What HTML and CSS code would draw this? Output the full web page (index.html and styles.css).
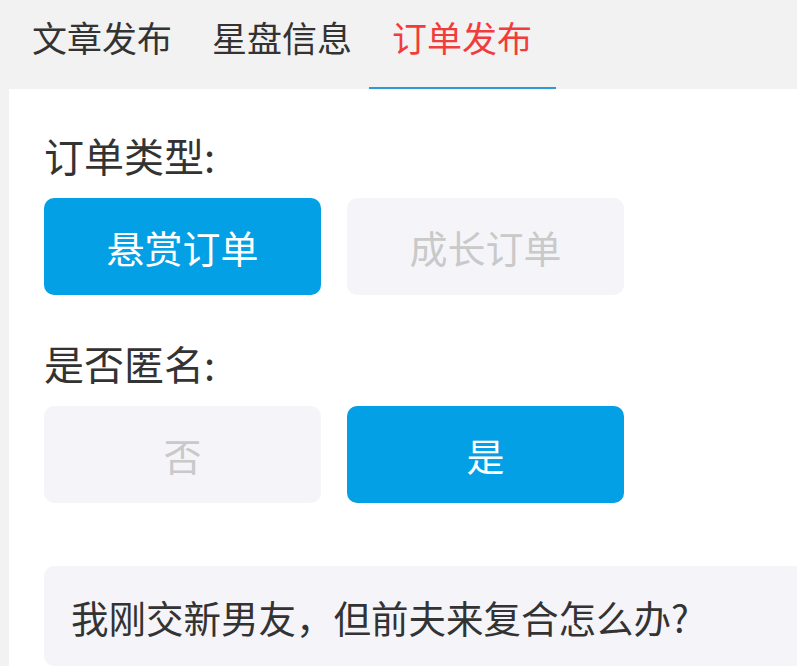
FILE: index.html
```html
<!DOCTYPE html>
<html lang="zh-CN">
<head>
<meta charset="utf-8">
<title>订单发布</title>
<link rel="stylesheet" href="styles.css">
</head>
<body>
  <nav class="tabs">
    <div class="tab">文章发布</div>
    <div class="tab">星盘信息</div>
    <div class="tab active">订单发布</div>
  </nav>
  <main class="panel">
    <section class="field">
      <div class="label">订单类型:</div>
      <div class="options">
        <div class="opt on">悬赏订单</div>
        <div class="opt">成长订单</div>
      </div>
    </section>
    <section class="field">
      <div class="label">是否匿名:</div>
      <div class="options">
        <div class="opt">否</div>
        <div class="opt on">是</div>
      </div>
    </section>
    <div class="question">我刚交新男友，但前夫来复合怎么办?</div>
  </main>
</body>
</html>
```
FILE: styles.css
```css
html, body {
  margin: 0;
  padding: 0;
}
body {
  background: #f2f2f2;
  font-family: "Noto Sans CJK SC", "Microsoft YaHei", sans-serif;
  color: #333;
  overflow: hidden;
  width: 797px;
  height: 666px;
}
.tabs {
  display: flex;
  height: 89px;
  padding-left: 12px;
}
.tab {
  position: relative;
  padding: 0 20px;
  font-size: 35px;
  line-height: 73px;
  color: #333;
  white-space: nowrap;
}
.tab.active {
  color: #f23c3c;
}
.tab.active::after {
  content: "";
  position: absolute;
  left: -3px;
  top: 87px;
  width: 187px;
  height: 2px;
  background: #2a9ad8;
}
.panel {
  margin-left: 9px;
  width: 1000px;
  height: 600px;
  background: #fff;
  padding: 42px 0 0 35px;
  box-sizing: border-box;
}
.field + .field {
  margin-top: 44px;
}
.label {
  font-size: 40px;
  line-height: 48px;
  margin-bottom: 19px;
  color: #333;
}
.options {
  display: flex;
  gap: 26px;
}
.opt {
  width: 277px;
  height: 97px;
  border-radius: 10px;
  background: #f5f5f9;
  color: #c9c9c9;
  font-size: 38px;
  display: flex;
  align-items: center;
  justify-content: center;
}
.opt.on {
  background: #03a0e6;
  color: #fff;
}
.question {
  margin-top: 63px;
  width: 900px;
  height: 100px;
  border-radius: 10px;
  background: #f5f5f9;
  box-sizing: border-box;
  padding-left: 27px;
  display: flex;
  align-items: center;
  font-size: 37.5px;
  color: #333;
}
```
